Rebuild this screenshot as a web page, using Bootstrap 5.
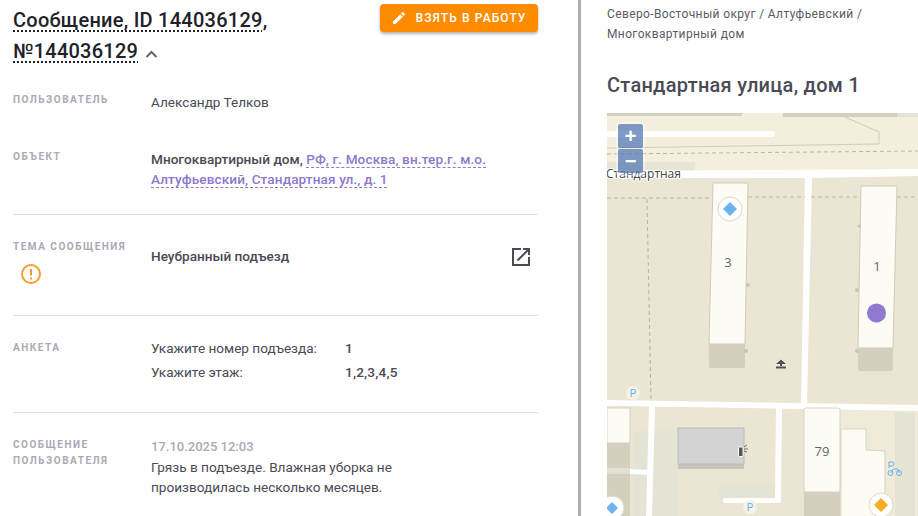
<!DOCTYPE html>
<html lang="ru">
<head>
    <meta charset="UTF-8">
    <meta name="viewport" content="width=device-width, initial-scale=1.0">
    <title>Сообщение</title>
    <link href="https://cdn.jsdelivr.net/npm/bootstrap@5.3.0/dist/css/bootstrap.min.css" rel="stylesheet">
    <style>
        html, body { height: 516px; overflow: hidden; }
        body { font-family: Roboto, "Liberation Sans", sans-serif; font-size: 13.6px; color: #4a4a55; background: #fff; }
        .left-pane { width: 578px; height: 516px; padding: 4px 40px 0 13px; overflow: hidden; flex: none; }
        .pane-split { width: 3px; height: 516px; background: #adadad; flex: none; }
        .right-pane { flex: 1 1 auto; min-width: 0; height: 516px; padding-left: 26px; overflow: hidden; }
        .msg-title { font-size: 20px; font-weight: 500; letter-spacing: .25px; line-height: 31px; color: #212129; margin: 1px 0 0; width: 340px; }
        .msg-title span { text-decoration: underline dotted 2px; text-underline-offset: 3px; }
        .msg-title svg { margin-left: 2px; vertical-align: -1px; }
        .take-btn { background: #ff8c00; color: #fff; border: 0; border-radius: 4px; height: 28px; width: 158px; font-size: 12px; font-weight: 500; letter-spacing: 1.1px; box-shadow: 0 2px 3px rgba(0,0,0,.3); padding: 0; }
        .info-row { display: flex; }
        .info-label { width: 138px; flex: none; font-size: 10px; font-weight: 700; letter-spacing: 1.5px; line-height: 16px; color: #aaaab4; text-transform: uppercase; }
        .info-value { line-height: 20px; flex: 1 1 auto; }
        .info-value b { font-weight: 500; }
        .info-value a { color: #8c79cd; font-weight: 500; letter-spacing: .1px; text-decoration: underline dashed 1px; text-underline-offset: 3px; }
        .row-sep { border-top: 1px solid #e0e0e0; margin: 0 0 1px; height: 0; }
        .row-user { margin-top: 25px; }
        .row-object { margin-top: 37px; }
        .object-sep { margin-top: 25px; }
        .row-topic { padding-top: 23px; height: 99px; }
        .row-quiz { padding-top: 23px; height: 95px; }
        .row-msg { padding-top: 23px; }
        .topic-alert { display: block; margin: 8px 0 0 7px; }
        .topic-value { padding-top: 7px; }
        .topic-link { margin: -1px 5px 0 0; }
        .quiz-value { margin-top: -4px; }
        .quiz-name { width: 194px; }
        .quiz-line { line-height: 24px; }
        .quiz-line b { letter-spacing: .2px; }
        .msg-date { color: #aaaab4; font-weight: 500; font-size: 13px; line-height: 20px; }
        .crumbs { font-size: 12px; line-height: 20px; letter-spacing: .37px; padding-top: 4px; color: #5b5b66; }
        .place-title { font-size: 20px; font-weight: 500; letter-spacing: .27px; line-height: 26px; margin: 28px 0 15px; color: #4a4a55; }
        .map-box { position: relative; height: 404px; overflow: hidden; background: #ebe6d3; }
        .map-box svg { display: block; }
        .map-zoom { position: absolute; left: 11px; top: 11px; width: 25px; outline: 2px solid rgba(255,255,255,.4); border-radius: 2px; }
        .map-zoom button { display: block; width: 25px; height: 24px; padding: 0; border: 0; margin-bottom: 1px; background: rgba(84,123,183,.75); color: #fff; font: 700 20px/22px "Liberation Sans", sans-serif; border-radius: 2px; }
    </style>
</head>
<body>
<div class="d-flex">
    <div class="left-pane">
        <div class="d-flex justify-content-between align-items-start">
            <h1 class="msg-title"><span>Сообщение, ID 144036129</span>, <span>№144036129</span>
                <svg width="13" height="10" viewBox="0 0 13 10"><path d="M1.500 8 6.500 3l5 5" fill="none" stroke="#666" stroke-width="2"/></svg>
            </h1>
            <button class="take-btn d-flex align-items-center justify-content-center gap-2" type="button">
                <svg width="16" height="16" viewBox="0 0 24 24"><path fill="#fff" d="M3 17.25V21h3.75L17.81 9.94l-3.75-3.75L3 17.25zM20.71 7.04a1 1 0 0 0 0-1.41l-2.34-2.34a1 1 0 0 0-1.41 0l-1.83 1.83 3.75 3.75 1.83-1.83z"/></svg>
                ВЗЯТЬ В РАБОТУ
            </button>
        </div>

        <div class="info-row row-user">
            <div class="info-label">Пользователь</div>
            <div class="info-value">Александр Телков</div>
        </div>

        <div class="info-row row-object">
            <div class="info-label">Объект</div>
            <div class="info-value"><b>Многоквартирный дом,</b> <a href="#">РФ, г. Москва, вн.тер.г. м.о. Алтуфьевский, Стандартная ул., д. 1</a></div>
        </div>
        <hr class="row-sep object-sep opacity-100">

        <div class="info-row row-topic">
            <div class="info-label">
                Тема сообщения
                <svg class="topic-alert" width="22" height="22" viewBox="0 0 22 22"><circle cx="11" cy="11" r="9" fill="none" stroke="#ff9a2e" stroke-width="2"/><path d="M11 6v6.5M11 14.500v2" stroke="#ff9a2e" stroke-width="2"/></svg>
            </div>
            <div class="info-value topic-value d-flex justify-content-between">
                <b>Неубранный подъезд</b>
                <svg class="topic-link" width="24" height="24" viewBox="0 0 24 24"><path fill="#4a4a55" d="M19 19H5V5h7V3H3v18h18v-9h-2v7zM14 3v2h3.590l-9.830 9.830 1.410 1.410L19 6.410V10h2V3h-7z"/></svg>
            </div>
        </div>
        <hr class="row-sep opacity-100">

        <div class="info-row row-quiz">
            <div class="info-label">Анкета</div>
            <div class="info-value quiz-value">
                <div class="d-flex quiz-line"><span class="quiz-name">Укажите номер подъезда:</span><b>1</b></div>
                <div class="d-flex quiz-line"><span class="quiz-name">Укажите этаж:</span><b>1,2,3,4,5</b></div>
            </div>
        </div>
        <hr class="row-sep opacity-100">

        <div class="info-row row-msg">
            <div class="info-label">Сообщение пользователя</div>
            <div class="info-value">
                <div class="msg-date">17.10.2025 12:03</div>
                <div>Грязь в подъезде. Влажная уборка не<br>производилась несколько месяцев.</div>
            </div>
        </div>
    </div>
    <div class="pane-split"></div>
    <div class="right-pane">
        <div class="crumbs">Северо-Восточный округ / Алтуфьевский /<br>Многоквартирный дом</div>
        <h2 class="place-title">Стандартная улица, дом 1</h2>
        <div class="map-box">
            <svg width="311" height="404" viewBox="607 112 311 404">
                <!-- top quarter -->
                <rect x="607" y="112" width="311" height="62" fill="#f3efdc"/>
                <path d="M607 112h136l-2 3H607zM783 112h114v4H783z" fill="#d4d0bf"/>
                <path d="M897 112h21v4h-21z" fill="#e4e3d6"/>
                <rect x="600" y="130" width="175" height="6" rx="3" fill="#fff"/>
                <path d="M607 147 879 143V131L845 116" fill="none" stroke="#cfcbbb"/>
                <path d="M607 153 918 150" fill="none" stroke="#b8b4a0" stroke-dasharray="4 3"/>
                <path d="M607 161h88v9h-88z" fill="#e6e5d6"/>
                <!-- roads and blocks -->
                <path d="M607 170 918 168v9L607 177z" fill="#fff"/>
                <path d="M607 178 805 177 802 400 607 399z" fill="#ebe6d3"/>
                <path d="M812 177 918 175V403L807 402z" fill="#ebe6d3"/>
                <path d="M805 175h7l-5 230h-6z" fill="#fff"/>
                <path d="M607 399 918 404v6L607 405z" fill="#fff"/>
                <path d="M607 197 712 197M748 196 805 196M811 196 861 196M897 196 918 196" stroke="#b8b4a0" stroke-dasharray="4 3" fill="none"/>
                <path d="M647 198 651 400" stroke="#b8b4a0" stroke-dasharray="4 3" fill="none"/>
                <!-- building 3 -->
                <path d="M709 343h36v22a2 2 0 0 1-2 2h-32a2 2 0 0 1-2-2z" fill="#d5cfc0"/>
                <path d="M713 182h34a1 1 0 0 1 1 1l-3 160h-36z" fill="#fcfbf4" stroke="#d0cbb9"/>
                <circle cx="748" cy="284" r="2" fill="#c9c5b5"/><circle cx="746" cy="350" r="2" fill="#c9c5b5"/>
                <text x="728" y="266" font-family="Open Sans" font-size="13" fill="#666" text-anchor="middle">3</text>
                <!-- building 1 -->
                <path d="M858 346h35v22a2 2 0 0 1-2 2h-31a2 2 0 0 1-2-2z" fill="#d5cfc0"/>
                <path d="M861 185h35a1 1 0 0 1 1 1l-4 161h-35z" fill="#fcfbf4" stroke="#d0cbb9"/>
                <circle cx="859" cy="225" r="1.500" fill="#c9c5b5"/><circle cx="857" cy="289" r="2" fill="#c9c5b5"/><circle cx="857" cy="350" r="2" fill="#c9c5b5"/>
                <text x="877" y="270" font-family="Open Sans" font-size="13" fill="#666" text-anchor="middle">1</text>
                <!-- lower quarter -->
                <path d="M607 405 802 408 802 516H607z" fill="#ebe6d3"/>
                <path d="M808 408 918 411V516H808z" fill="#f0ebd8"/>
                <path d="M633 430h44v86h-44zM895 411l20 1v104h-20zM719 483h56v14h-56z" fill="#e4e3d4"/>
                <path d="M607 407h23v35H607z" fill="#fcfbf4" stroke="#d8d3c2"/>
                <path d="M607 442h23v74H607z" fill="#d5cfc0"/>
                <path d="M607 467 630 467v6H607z" fill="#e4e1d4"/>
                <path d="M630 468 650 469v5L630 473z" fill="#fff"/>
                <path d="M649 405h6l-3 111h-6z" fill="#fff"/>
                <path d="M776 407h6l-1 94h-6z" fill="#fff"/>
                <rect x="723" y="497" width="58" height="5" rx="2.500" fill="#fff"/>
                <path d="M678 463h66v5h-66z" fill="#c5c3ba"/>
                <rect x="678" y="427" width="66" height="36" fill="#d3d3d3" stroke="#bdbcb6"/>
                <path d="M804 491h36v25h-36z" fill="#d5cfc0"/>
                <rect x="804" y="407" width="36" height="84" rx="2" fill="#fcfbf4" stroke="#d8d3c2"/>
                <text x="822" y="455" font-family="Open Sans" font-size="13" fill="#666" text-anchor="middle">79</text>
                <path d="M841 428h25v21l19 1v66h-44z" fill="#fcfbf4" stroke="#d8d3c2"/>
                <!-- pois -->
                <circle cx="633" cy="392" r="7" fill="#f5f3e8"/>
                <text x="633" y="396" font-family="Roboto" font-size="10" fill="#69b1ec" text-anchor="middle">P</text>
                <circle cx="750" cy="506" r="7" fill="#f5f3e8"/>
                <text x="750" y="510" font-family="Roboto" font-size="10" fill="#69b1ec" text-anchor="middle">P</text>
                <path d="M781 358.500l5 4.500h-4v2h-2v-2h-4zM776 365.500h10v2h-10z" fill="#4f4f4f" stroke="#fff" stroke-width=".5" paint-order="stroke"/>
                <rect x="738.500" y="446" width="4.500" height="9.500" rx="1" fill="#555" stroke="#fff"/>
                <path d="M744 446l3-2M744 448h4M744 450l3 1" stroke="#555" fill="none" stroke-width=".8"/>
                <g fill="none" stroke="#69b1ec"><circle cx="890.500" cy="472" r="2.500"/><circle cx="899" cy="472" r="2.500"/><path d="M890.500 472l3-4h4l2 4M889 461v6M889 461h3a2 2 0 0 1 0 4h-3"/></g>
                <!-- markers -->
                <circle cx="730" cy="208" r="12" fill="#fff" stroke="#dcd8cc"/>
                <path d="M730 201l7 7-7 7-7-7z" fill="#6cb4ee"/>
                <circle cx="876.500" cy="312" r="9.500" fill="#8f7acf"/>
                <circle cx="612" cy="507" r="12" fill="#fff" stroke="#dcd8cc"/>
                <path d="M612 501l6 6-6 6-6-6z" fill="#6cb4ee"/>
                <circle cx="881" cy="504" r="12" fill="#fff" stroke="#dcd8cc"/>
                <path d="M881 497l7 7-7 7-7-7z" fill="#f7ae1e"/>
                <!-- street name -->
                <text x="606" y="177" font-family="Open Sans" font-size="12" fill="#444" stroke="#fff" stroke-width="2" paint-order="stroke">Стандартная</text>
            </svg>
            <div class="map-zoom">
                <button type="button">+</button>
                <button type="button">−</button>
            </div>
        </div>
    </div>
</div>
<script src="https://cdn.jsdelivr.net/npm/bootstrap@5.3.0/dist/js/bootstrap.bundle.min.js"></script>
</body>
</html>
